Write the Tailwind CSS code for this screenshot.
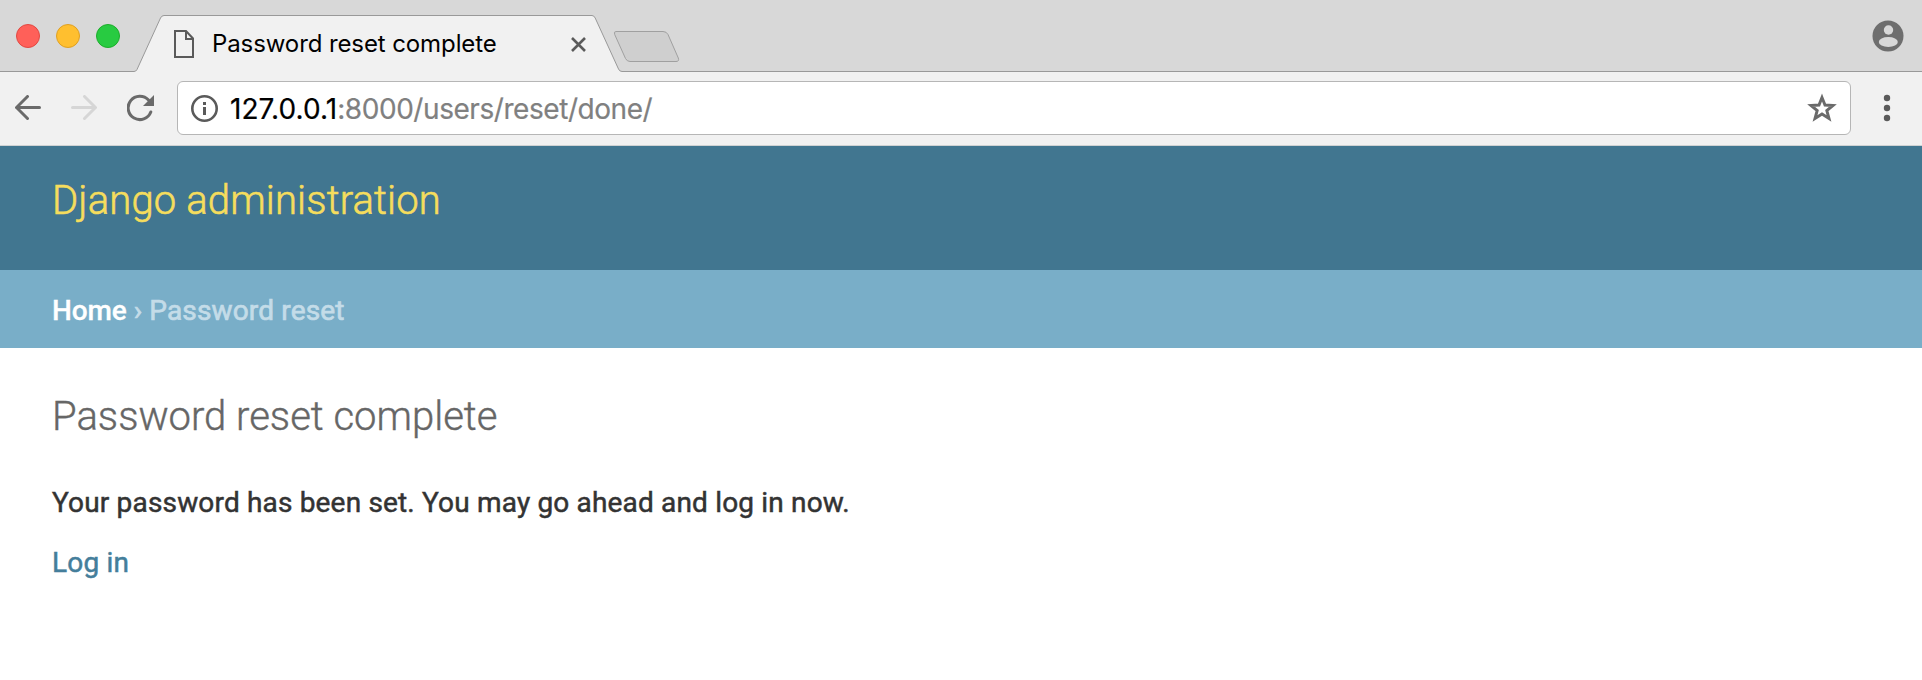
<!DOCTYPE html>
<html lang="en">
<head>
<meta charset="utf-8">
<title>Password reset complete</title>
<script src="https://cdn.jsdelivr.net/npm/@tailwindcss/browser@4"></script>
</head>
<body class="bg-white h-[680px] overflow-hidden font-['Roboto',sans-serif] whitespace-nowrap">
<div class="relative flex h-[72px] bg-[#d8d8d8] font-['Inter',sans-serif]">
  <svg class="absolute inset-0" width="1922" height="72" fill="none">
    <path d="M0 71.5H134Q136 71.5 137 69.5L160.500 18Q161.700 15.500 164 15.500H592Q594 15.500 595.200 18L618.500 69Q619.500 71.500 622 71.500H1922V72H0Z" fill="#f1f1f1"/>
    <path d="M0 71.500H134Q136 71.500 137 69.500L160.500 18Q161.700 15.500 164 15.500H592Q594 15.500 595.200 18L618.500 69Q619.500 71.500 622 71.500H1922" stroke="#999"/>
    <path d="M616 31.500H663Q666.500 31.500 668 34.500L678.300 58Q679.500 61.500 676 61.500H630Q627 61.500 625.500 58.500L614.700 34.500Q613.500 31.500 616 31.500Z" fill="#cfcfcf" stroke="#a0a0a0"/>
  </svg>
  <div class="relative flex items-start gap-4 pl-4 pt-6">
    <span class="size-6 rounded-full bg-[#ff6059] border border-[#e14942]"></span>
    <span class="size-6 rounded-full bg-[#ffbf2f] border border-[#dfa023]"></span>
    <span class="size-6 rounded-full bg-[#28cb41] border border-[#1dad2b]"></span>
  </div>
  <div class="relative flex items-start pl-[54px]">
    <svg class="mt-[30px]" width="20" height="28" fill="none" stroke="#5a5a5a" stroke-width="2"><path d="M1 1H12L19 8.500V27H1ZM12 1V9H19"/></svg>
    <span class="ml-[18px] mt-[28px] w-[290px] text-[24px] leading-[32px] tracking-[-0.1px] text-black">Password reset complete</span>
    <svg class="ml-[69px] mt-[37px]" width="15" height="15" stroke="#5a5a5a" stroke-width="2.600"><path d="M1 1L14 14M14 1L1 14"/></svg>
  </div>
  <svg class="relative ml-auto mr-[18px] mt-5" width="32" height="32"><circle cx="16" cy="16" r="15.500" fill="#6e6e6e"/><circle cx="16.500" cy="10" r="4.700" fill="#d8d8d8"/><ellipse cx="16.300" cy="22" rx="9.500" ry="5" fill="#d8d8d8"/></svg>
</div>
<div class="flex h-[74px] border-b border-[#cfd2d3] bg-[#f1f1f1] pl-[15px] pt-[9px] font-['Inter',sans-serif]">
  <svg class="mt-[14px]" width="26" height="26" fill="none" stroke="#6a6a6a" stroke-width="3" stroke-linecap="round"><path d="M24.500 12.500H1.500M12.500 1.500L1.500 12.500L12.500 23.500"/></svg>
  <svg class="ml-[30px] mt-[14px]" width="26" height="26" fill="none" stroke="#d6d6d6" stroke-width="3" stroke-linecap="round"><path d="M1.500 12.500H24.500M13.500 1.500L24.500 12.500L13.500 23.500"/></svg>
  <svg class="ml-[30px] mt-[13px]" width="28" height="28" fill="none" stroke="#6a6a6a" stroke-width="3" stroke-linecap="round"><path d="M23.800 18A11.700 11.700 0 1 1 21.500 6"/><path d="M27 1V12H16Z" fill="#6a6a6a" stroke="none"/></svg>
  <div class="ml-[22px] flex h-[54px] w-[1674px] rounded-[6px] border border-[#b6b6b6] bg-white">
    <svg class="ml-[13px] mt-[13px]" width="28" height="28"><circle cx="13.500" cy="13.500" r="12.200" fill="none" stroke="#5a5a5a" stroke-width="2.600"/><path d="M12 7H15V10H12ZM12 12H15V20H12Z" fill="#5a5a5a"/></svg>
    <span class="ml-[11px] mt-[7px] text-[28px] leading-[40px] tracking-[0.08px] text-black [-webkit-text-stroke:0.2px]">127.0.0.1<span class="tracking-[-0.44px] text-[#808080]">:8000/users/reset/done/</span></span>
    <svg class="ml-auto mr-[13px] mt-[11px]" width="30" height="30" fill="none" stroke="#6a6a6a" stroke-width="2.900"><path d="M15 4.500L18 12L26 12.500L19.800 17.500L22 25.500L15 21L8 25.500L10.200 17.500L4 12.500L12 12Z"/></svg>
  </div>
  <svg class="ml-[32px] mt-[13px]" width="8" height="28" fill="#5a5a5a"><circle cx="4" cy="4" r="3.200"/><circle cx="4" cy="14" r="3.200"/><circle cx="4" cy="24" r="3.200"/></svg>
</div>
<header class="h-[124px] bg-[#417690] pl-[52px] pt-[31px]">
  <h1 class="text-[40px] font-light leading-[48px] tracking-[0.15px] text-[#f5dd5d] [-webkit-text-stroke:0.6px]">Django administration</h1>
</header>
<nav class="h-[78px] bg-[#79aec8] pl-[52px] pt-[21px] text-[28px] leading-[40px] tracking-[0.15px] text-[#c4dce8] [-webkit-text-stroke:0.7px]"><span class="font-medium tracking-[-0.12px] text-white [-webkit-text-stroke:0.3px]">Home</span><span class="tracking-[0.1px]"> › </span><span>Password reset</span></nav>
<main class="pl-[52px] pt-[45px]">
  <h2 class="text-[40px] font-light leading-[48px] text-[#666] [-webkit-text-stroke:0.4px]">Password reset complete</h2>
  <p class="mt-[42px] text-[28px] leading-[40px] tracking-[0.17px] text-[#333] [-webkit-text-stroke:0.5px]">Your password has been set. You may go ahead and log in now.</p>
  <a class="mt-5 block text-[28px] leading-[40px] tracking-[0.17px] text-[#447e9b] [-webkit-text-stroke:0.5px]">Log in</a>
</main>
</body>
</html>
